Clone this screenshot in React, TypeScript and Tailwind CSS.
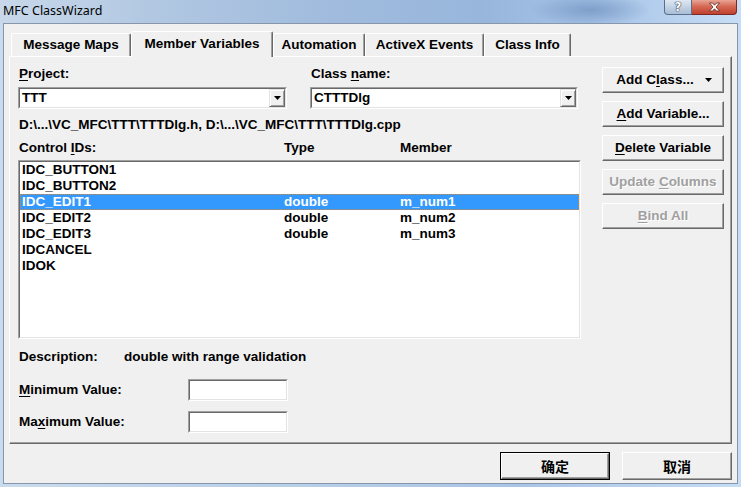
import React from "react";

const rows = [
  { id: "IDC_BUTTON1", type: "", member: "" },
  { id: "IDC_BUTTON2", type: "", member: "" },
  { id: "IDC_EDIT1", type: "double", member: "m_num1" },
  { id: "IDC_EDIT2", type: "double", member: "m_num2" },
  { id: "IDC_EDIT3", type: "double", member: "m_num3" },
  { id: "IDCANCEL", type: "", member: "" },
  { id: "IDOK", type: "", member: "" },
];

const tabs = [
  { label: "Message Maps", w: "w-[120px]" },
  { label: "Member Variables", w: "w-[142px]", active: true },
  { label: "Automation", w: "w-[92px]" },
  { label: "ActiveX Events", w: "w-[119px]" },
  { label: "Class Info", w: "w-[87px]" },
];

const U = ({ children }: { children: React.ReactNode }) => (
  <span className="underline decoration-1 underline-offset-2">{children}</span>
);

const Arrow = () => (
  <svg width="7" height="4" viewBox="0 0 7 4">
    <polygon points="0,0 7,0 3.5,4" fill="#000" />
  </svg>
);

interface BtnProps {
  children: React.ReactNode;
  disabled?: boolean;
  isDefault?: boolean;
  className?: string;
}

const Btn: React.FC<BtnProps> = ({ children, disabled, isDefault, className = "" }) => {
  const face = (
    <div
      className={`flex h-full w-full items-center justify-center border border-t-white border-l-white border-r-[#696969] border-b-[#696969] bg-[#f0f0f0] shadow-[inset_-1px_-1px_0_#a0a0a0] ${
        disabled ? "text-[#a0a0a0] [text-shadow:1px_1px_0_#fff]" : "text-black"
      }`}
    >
      {children}
    </div>
  );
  return (
    <div className={`${className} ${isDefault ? "border border-black" : ""}`}>{face}</div>
  );
};

const Sunken: React.FC<{ className?: string; children?: React.ReactNode }> = ({
  className = "",
  children,
}) => (
  <div
    className={`${className} border border-t-[#a0a0a0] border-l-[#a0a0a0] border-r-white border-b-white`}
  >
    <div className="h-full w-full border border-t-[#696969] border-l-[#696969] border-r-[#e3e3e3] border-b-[#e3e3e3] bg-white">
      {children}
    </div>
  </div>
);

const Combo: React.FC<{ value: string; className: string }> = ({ value, className }) => (
  <Sunken className={className}>
    <div className="flex h-full items-center">
      <span className="flex-1 pl-[2px]">{value}</span>
      <div className="flex h-full w-[16px] items-center justify-center border border-t-[#e3e3e3] border-l-[#e3e3e3] border-r-[#696969] border-b-[#696969] bg-[#f0f0f0] shadow-[inset_1px_1px_0_#fff,inset_-1px_-1px_0_#a0a0a0]">
        <Arrow />
      </div>
    </div>
  </Sunken>
);

export default function App() {
  return (
    <div className="flex h-[487px] w-[741px] flex-col overflow-hidden bg-[linear-gradient(90deg,#c9dbee_0%,#b8cfe8_40%,#a9c5e6_70%,#c6ddf5_100%)] font-['Liberation_Sans',Arial,sans-serif] text-[13.5px] font-bold leading-none text-black">
      {/* title bar */}
      <div className="flex h-[23px] shrink-0 items-start justify-between bg-[radial-gradient(ellipse_60px_16px_at_590px_10px,#7f9fca,transparent),linear-gradient(90deg,#c8d8ea_0%,#b2c8e2_20%,#a0bbdd_45%,#98b6dc_65%,#a5c2e6_80%,#c8def6_100%)]">
        <span className="pl-[3px] pt-[4px] font-['Noto_Sans','DejaVu_Sans',sans-serif] text-[12.5px] font-normal leading-[13px] text-black">
          MFC ClassWizard
        </span>
        <div className="flex pr-[4px]">
          <div className="flex h-[15px] w-[28px] items-center justify-center rounded-bl-[4px] border border-t-0 border-[#5b6f8c] bg-[linear-gradient(180deg,#dfe8f3_0%,#c3d2e4_50%,#a9bdd6_100%)]">
            <span className="font-['DejaVu_Sans',sans-serif] text-[12px] font-bold leading-none text-white [text-shadow:0_0_1px_#334,0_0_1px_#334,0_0_1px_#334]">
              ?
            </span>
          </div>
          <div className="flex h-[15px] w-[45px] items-center justify-center rounded-br-[4px] border border-l-0 border-t-0 border-[#7a2a22] bg-[linear-gradient(180deg,#e9a596_0%,#d66a55_45%,#c0402e_100%)]">
            <svg width="13" height="10" viewBox="0 0 13 10">
              <path
                d="M1.5 1 L4.5 1 L6.5 3.2 L8.5 1 L11.5 1 L8 5 L11.5 9 L8.5 9 L6.5 6.8 L4.5 9 L1.5 9 L5 5 Z"
                fill="#fff"
                stroke="#5a2a24"
                strokeWidth="0.8"
              />
            </svg>
          </div>
        </div>
      </div>

      {/* client area */}
      <div className="mx-[3px] mb-[3px] flex flex-1 flex-col border border-[#8796aa] bg-[#f0f0f0]">
        {/* tabs */}
        <div className="relative z-10 flex h-[32px] items-end pl-[7px] pt-[7px]">
          {tabs.map((t) =>
            t.active ? (
              <div
                key={t.label}
                className={`${t.w} -mb-px flex h-[26px] items-center justify-center rounded-t-[2px] border border-b-0 border-t-white border-l-white border-r-[#696969] bg-[#f0f0f0] shadow-[inset_-1px_0_0_#a0a0a0] pb-[2px]`}
              >
                {t.label}
              </div>
            ) : (
              <div
                key={t.label}
                className={`${t.w} flex h-[23px] items-center justify-center rounded-t-[2px] border border-b-0 border-t-white border-l-white border-r-[#696969] shadow-[inset_-1px_0_0_#a0a0a0]`}
              >
                {t.label}
              </div>
            )
          )}
        </div>

        {/* tab page */}
        <div className="mx-[5px] flex h-[388px] gap-[21px] border border-t-white border-l-white border-r-[#696969] border-b-[#696969] pl-[8px] shadow-[inset_-1px_-1px_0_#a0a0a0]">
          <div className="flex w-[563px] flex-col">
            <div className="mt-[9px] flex h-[16px] items-center">
              <span className="w-[292px] pl-[1px]">
                <U>P</U>roject:
              </span>
              <span className="pl-[1px]">
                Class <U>n</U>ame:
              </span>
            </div>
            <div className="mt-[5px] flex gap-[23px]">
              <Combo value="TTT" className="h-[22px] w-[269px]" />
              <Combo value="CTTTDlg" className="h-[22px] w-[268px]" />
            </div>
            <div className="mt-[8px] flex h-[16px] items-center pl-[1px]">
              D:\...\VC_MFC\TTT\TTTDlg.h, D:\...\VC_MFC\TTT\TTTDlg.cpp
            </div>
            <div className="mt-[7px] flex h-[16px] items-center">
              <span className="w-[266px] pl-[1px]">
                Control <U>I</U>Ds:
              </span>
              <span className="w-[116px]">Type</span>
              <span>Member</span>
            </div>
            <Sunken className="mt-[4px] h-[179px] w-[563px]">
              <div className="flex flex-col">
                {rows.map((r) => {
                  const sel = r.id === "IDC_EDIT1";
                  return (
                    <div
                      key={r.id}
                      className={`flex h-[16px] items-center ${
                        sel
                          ? "bg-[#3399ff] text-white outline-1 -outline-offset-1 outline-dotted outline-[#d9862c]"
                          : ""
                      }`}
                    >
                      <span className="w-[264px] pl-[2px]">{r.id}</span>
                      <span className="w-[116px]">{r.type}</span>
                      <span>{r.member}</span>
                    </div>
                  );
                })}
              </div>
            </Sunken>
            <div className="mt-[10px] flex h-[16px] items-center">
              <span className="w-[106px] pl-[1px]">Description:</span>
              <span>double with range validation</span>
            </div>
            <div className="mt-[14px] flex items-center">
              <span className="w-[170px] pl-[1px]">
                <U>M</U>inimum Value:
              </span>
              <Sunken className="h-[22px] w-[100px]" />
            </div>
            <div className="mt-[10px] flex items-center">
              <span className="w-[170px] pl-[1px]">
                Ma<U>x</U>imum Value:
              </span>
              <Sunken className="h-[22px] w-[100px]" />
            </div>
          </div>

          <div className="flex flex-col gap-[8px] pt-[10px]">
            <Btn className="h-[26px] w-[122px]">
              <span className="flex w-full items-center pl-[9px]">
                <span className="w-[86px] text-center">
                  Add C<U>l</U>ass...
                </span>
                <span className="ml-[7px] flex">
                  <Arrow />
                </span>
              </span>
            </Btn>
            <Btn className="h-[26px] w-[122px]">
              <span>
                <U>A</U>dd Variable...
              </span>
            </Btn>
            <Btn className="h-[26px] w-[122px]">
              <span>
                <U>D</U>elete Variable
              </span>
            </Btn>
            <Btn className="h-[26px] w-[122px]" disabled>
              <span>
                Update <U>C</U>olumns
              </span>
            </Btn>
            <Btn className="h-[26px] w-[122px]" disabled>
              <span>
                <U>B</U>ind All
              </span>
            </Btn>
          </div>
        </div>

        {/* bottom buttons */}
        <div className="mt-[8px] flex justify-end gap-[12px] pr-[5px] font-['Noto_Sans_CJK_SC',sans-serif] text-[14px]">
          <Btn className="h-[28px] w-[110px]" isDefault>
            确定
          </Btn>
          <Btn className="h-[28px] w-[110px]">取消</Btn>
        </div>
      </div>
    </div>
  );
}
